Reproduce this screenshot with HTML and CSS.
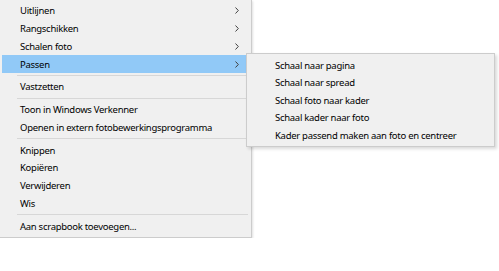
FILE: index.html
```html
<!DOCTYPE html>
<html lang="nl">
<head>
    <meta charset="UTF-8">
    <title>Contextmenu</title>
    <link rel="stylesheet" href="styles.css">
</head>
<body>
    <div class="menu">
        <div class="item">Uitlijnen <svg class="arrow" width="4" height="7" viewBox="0 0 4 7"><path d="M0.5 0.5 L3.3 3.5 L0.5 6.5" /></svg></div>
        <div class="item">Rangschikken <svg class="arrow" width="4" height="7" viewBox="0 0 4 7"><path d="M0.5 0.5 L3.3 3.5 L0.5 6.5" /></svg></div>
        <div class="item">Schalen foto <svg class="arrow" width="4" height="7" viewBox="0 0 4 7"><path d="M0.5 0.5 L3.3 3.5 L0.5 6.5" /></svg></div>
        <div class="item active">Passen <svg class="arrow" width="4" height="7" viewBox="0 0 4 7"><path d="M0.5 0.5 L3.3 3.5 L0.5 6.5" /></svg>
            <div class="submenu">
                <div class="subitem">Schaal naar pagina</div>
                <div class="subitem">Schaal naar spread</div>
                <div class="subitem">Schaal foto naar kader</div>
                <div class="subitem">Schaal kader naar foto</div>
                <div class="subitem">Kader passend maken aan foto en centreer</div>
            </div>
        </div>
        <div class="sep"></div>
        <div class="item">Vastzetten</div>
        <div class="sep"></div>
        <div class="item">Toon in Windows Verkenner</div>
        <div class="item">Openen in extern fotobewerkingsprogramma</div>
        <div class="sep"></div>
        <div class="item">Knippen</div>
        <div class="item">Kopiëren</div>
        <div class="item">Verwijderen</div>
        <div class="item">Wis</div>
        <div class="sep"></div>
        <div class="item">Aan scrapbook toevoegen...</div>
    </div>
</body>
</html>
```

FILE: styles.css
```css
body {
    margin: 0;
    background: #ffffff;
    font-family: 'Noto Sans', 'Open Sans', sans-serif;
    font-size: 9.5px;
    letter-spacing: -0.28px;
    color: #000;
}
.menu {
    width: 251px;
    background: #f0f0f0;
    border-right: 1px solid #cccccc;
    border-bottom: 1px solid #cccccc;
    padding: 2px 0 2px 0;
    box-shadow: 1px 1px 2px rgba(0,0,0,0.12);
}
.item {
    position: relative;
    display: flex;
    align-items: center;
    justify-content: space-between;
    height: 17.75px;
    margin: 0 2px;
    padding: 0 10px 0 18px;
    white-space: nowrap;
}
.item.active {
    background: #91c9f7;
}
.arrow {
    flex: none;
}
.arrow path {
    fill: none;
    stroke: #404040;
    stroke-width: 1;
}
.sep {
    height: 1px;
    margin: 2px 3px 2px 17px;
    background: #d7d7d7;
}
.submenu {
    position: absolute;
    top: -2px;
    left: 244px;
    width: 247px;
    background: #f0f0f0;
    border: 1px solid #cccccc;
    padding: 2px 0;
    box-shadow: 2px 2px 3px rgba(0,0,0,0.15);
}
.subitem {
    display: flex;
    align-items: center;
    height: 17.5px;
    padding: 0 0 0 28px;
    white-space: nowrap;
}
```
